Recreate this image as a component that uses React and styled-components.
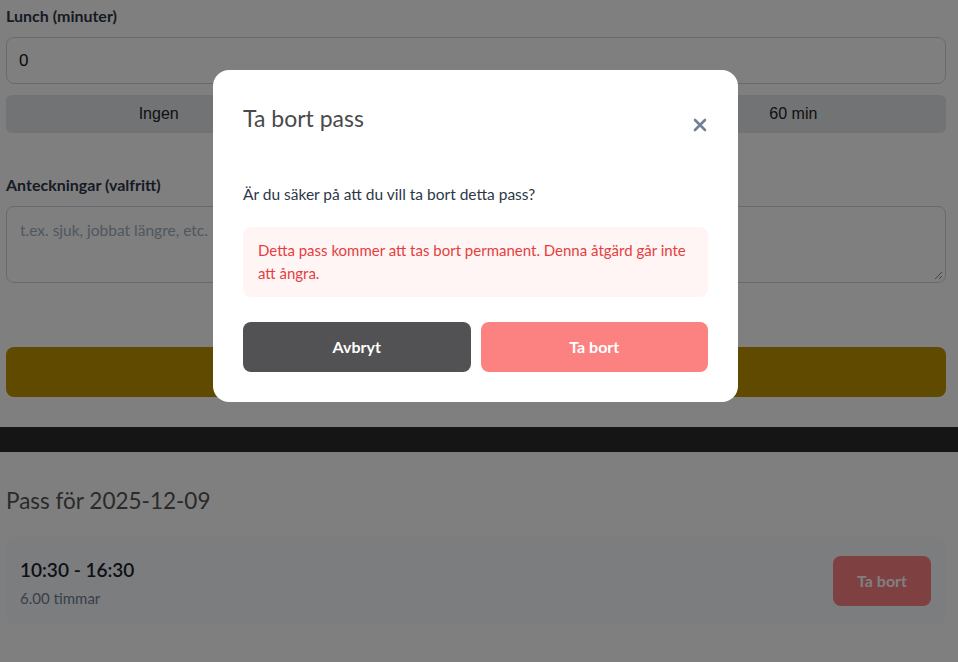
import React from 'react'
import styled, { createGlobalStyle } from 'styled-components'

const GlobalStyle = createGlobalStyle`
  html, body {
    margin: 0;
    padding: 0;
    background: #ffffff;
    font-family: Lato, "Liberation Sans", sans-serif;
    overflow: hidden;
  }
  * { box-sizing: border-box; }
`

const Page = styled.div`
  padding: 6px 12px 0 6px;
`

const Form = styled.div`
  display: flex;
  flex-direction: column;
`

const Label = styled.div`
  font-weight: 700;
  font-size: 16px;
  color: #2d3748;
  line-height: 20px;
  margin-bottom: 11px;
`

const Input = styled.div`
  height: 47px;
  border: 1px solid #cbd5e0;
  border-radius: 8px;
  padding: 0 12px;
  display: flex;
  align-items: center;
  font-family: "Liberation Sans", Arial, sans-serif;
  font-size: 17px;
  color: #111;
`

const Presets = styled.div`
  display: grid;
  grid-template-columns: repeat(3, 1fr);
  gap: 12px;
  margin-top: 11px;
  margin-bottom: 42px;
`

const Preset = styled.div`
  height: 38px;
  border-radius: 6px;
  background: #e2e6ea;
  display: flex;
  align-items: center;
  justify-content: center;
  font-family: "Liberation Sans", Arial, sans-serif;
  font-size: 16px;
  color: #222;
`

const TextArea = styled.div`
  height: 77px;
  border: 1px solid #cbd5e0;
  border-radius: 8px;
  padding: 14px 13px;
  font-size: 15.5px;
  color: #a0aec0;
  position: relative;
`

const Grip = styled.svg`
  position: absolute;
  right: 2px;
  bottom: 2px;
`

const SaveButton = styled.div`
  height: 50px;
  border-radius: 8px;
  background: #bf9500;
  margin-top: 64px;
`

const Band = styled.div`
  height: 25px;
  background: #2a2a2a;
  margin: 30px -12px 0 -6px;
`

const Heading = styled.h2`
  margin: 35px 0 0;
  font-weight: 400;
  font-size: 22.5px;
  color: #555;
`

const ShiftCard = styled.div`
  margin-top: 23px;
  background: #f8fafc;
  border-radius: 8px;
  height: 87px;
  padding: 0 15px 0 14px;
  display: flex;
  align-items: center;
  justify-content: space-between;
`

const ShiftInfo = styled.div`
  display: flex;
  flex-direction: column;
  gap: 8px;
  padding-top: 3px;
`

const ShiftTime = styled.div`
  font-size: 19px;
  font-weight: 600;
  color: #1a202c;
`

const ShiftHours = styled.div`
  font-size: 15px;
  color: #718096;
`

const SmallDelete = styled.div`
  width: 98px;
  height: 50px;
  border-radius: 8px;
  background: #fc8181;
  color: #fff;
  font-weight: 700;
  font-size: 16px;
  display: flex;
  align-items: center;
  justify-content: center;
`

const Overlay = styled.div`
  position: fixed;
  inset: 0;
  background: rgba(0, 0, 0, 0.5);
  display: flex;
  justify-content: center;
  align-items: flex-start;
  padding: 70px 7px 0 0;
`

const Modal = styled.div`
  width: 525px;
  background: #fff;
  border-radius: 16px;
  padding: 30px 30px 30px;
`

const ModalHeader = styled.div`
  display: flex;
  justify-content: space-between;
  align-items: flex-start;
`

const ModalTitle = styled.h3`
  margin: 0;
  font-size: 23px;
  font-weight: 400;
  color: #4a4a4a;
  line-height: 36px;
`

const CloseButton = styled.button`
  border: 0;
  background: none;
  padding: 0;
  margin: 18px 1px 0 0;
  display: flex;
  cursor: pointer;
`

const Question = styled.p`
  margin: 47px 0 0;
  font-size: 15.5px;
  color: #2d3748;
  line-height: 22px;
`

const Warning = styled.div`
  margin-top: 22px;
  background: #fff5f5;
  border-radius: 8px;
  padding: 12px 15px;
  font-size: 15px;
  line-height: 23px;
  color: #e53e3e;
`

const Actions = styled.div`
  display: grid;
  grid-template-columns: 1fr 1fr;
  gap: 10px;
  margin-top: 25px;
`

const ActionButton = styled.button`
  height: 50px;
  border: 0;
  border-radius: 8px;
  background: ${p => (p.$danger ? '#fc8181' : '#525254')};
  color: #fff;
  font-family: inherit;
  font-weight: 700;
  font-size: 16px;
  padding-bottom: 2px;
  cursor: pointer;
`

export default function App() {
  return (
    <>
      <GlobalStyle />
      <Page>
        <Form>
          <Label>Lunch (minuter)</Label>
          <Input>0</Input>
          <Presets>
            <Preset>Ingen</Preset>
            <Preset>30 min</Preset>
            <Preset>60 min</Preset>
          </Presets>
          <Label>Anteckningar (valfritt)</Label>
          <TextArea>
            t.ex. sjuk, jobbat längre, etc.
            <Grip width="10" height="10" viewBox="0 0 10 10">
              <path d="M9 2 L2 9 M9 6 L6 9" stroke="#888" strokeWidth="1" />
            </Grip>
          </TextArea>
          <SaveButton />
        </Form>
        <Band />
        <Heading>Pass för 2025-12-09</Heading>
        <ShiftCard>
          <ShiftInfo>
            <ShiftTime>10:30 - 16:30</ShiftTime>
            <ShiftHours>6.00 timmar</ShiftHours>
          </ShiftInfo>
          <SmallDelete>Ta bort</SmallDelete>
        </ShiftCard>
      </Page>
      <Overlay>
        <Modal>
          <ModalHeader>
            <ModalTitle>Ta bort pass</ModalTitle>
            <CloseButton aria-label="Stäng">
              <svg width="14" height="14" viewBox="0 0 14 14">
                <path d="M2 2 L12 12 M12 2 L2 12" stroke="#718096" strokeWidth="2.6" strokeLinecap="round" />
              </svg>
            </CloseButton>
          </ModalHeader>
          <Question>Är du säker på att du vill ta bort detta pass?</Question>
          <Warning>
            Detta pass kommer att tas bort permanent. Denna åtgärd går inte att ångra.
          </Warning>
          <Actions>
            <ActionButton>Avbryt</ActionButton>
            <ActionButton $danger>Ta bort</ActionButton>
          </Actions>
        </Modal>
      </Overlay>
    </>
  )
}
